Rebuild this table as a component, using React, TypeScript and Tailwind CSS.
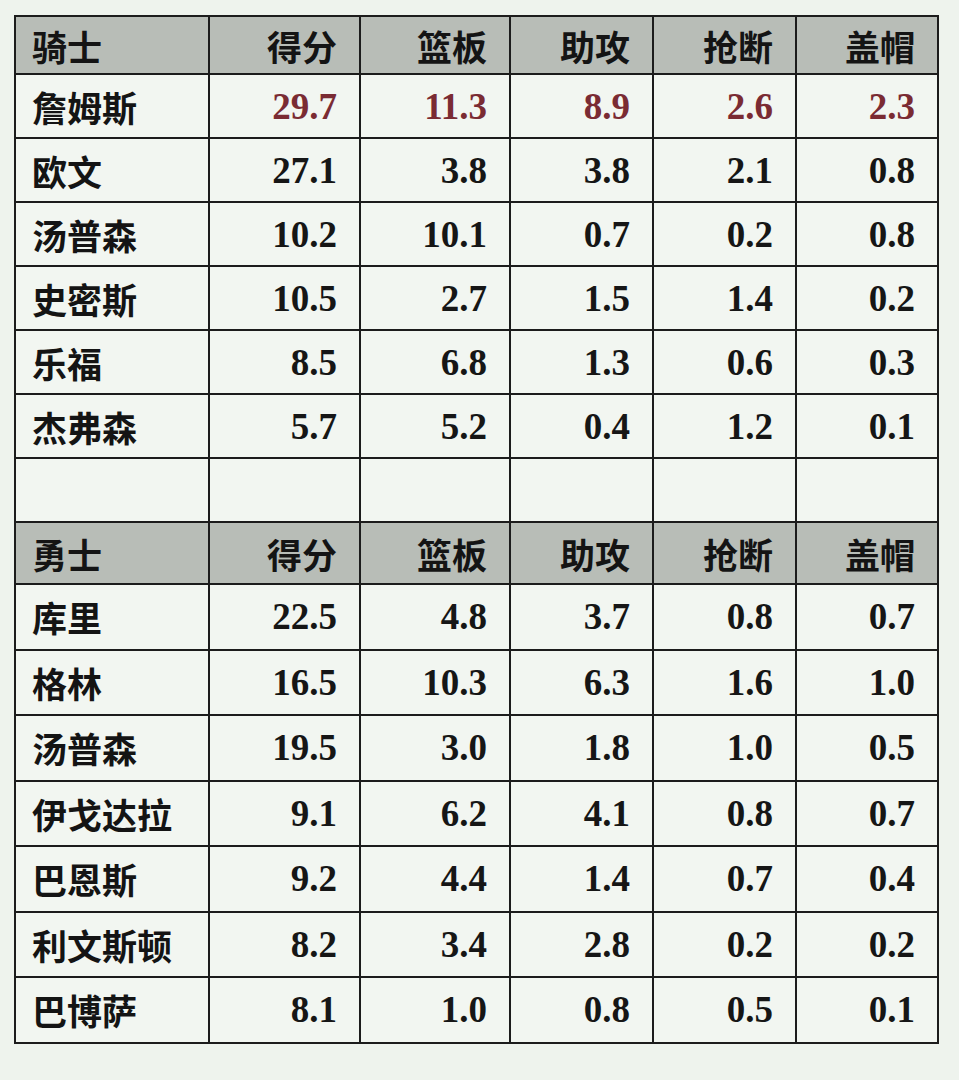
import React from "react";

type Row = { name: string; stats: string[]; hot?: boolean };

const heads = ["得分", "篮板", "助攻", "抢断", "盖帽"];

const cavs: Row[] = [
  { name: "詹姆斯", stats: ["29.7", "11.3", "8.9", "2.6", "2.3"], hot: true },
  { name: "欧文", stats: ["27.1", "3.8", "3.8", "2.1", "0.8"] },
  { name: "汤普森", stats: ["10.2", "10.1", "0.7", "0.2", "0.8"] },
  { name: "史密斯", stats: ["10.5", "2.7", "1.5", "1.4", "0.2"] },
  { name: "乐福", stats: ["8.5", "6.8", "1.3", "0.6", "0.3"] },
  { name: "杰弗森", stats: ["5.7", "5.2", "0.4", "1.2", "0.1"] },
];

const warriors: Row[] = [
  { name: "库里", stats: ["22.5", "4.8", "3.7", "0.8", "0.7"] },
  { name: "格林", stats: ["16.5", "10.3", "6.3", "1.6", "1.0"] },
  { name: "汤普森", stats: ["19.5", "3.0", "1.8", "1.0", "0.5"] },
  { name: "伊戈达拉", stats: ["9.1", "6.2", "4.1", "0.8", "0.7"] },
  { name: "巴恩斯", stats: ["9.2", "4.4", "1.4", "0.7", "0.4"] },
  { name: "利文斯顿", stats: ["8.2", "3.4", "2.8", "0.2", "0.2"] },
  { name: "巴博萨", stats: ["8.1", "1.0", "0.8", "0.5", "0.1"] },
];

const cjk = "font-['Noto_Sans_CJK_SC',sans-serif] font-bold text-[35px] text-[#141414]";
const num = "font-['Liberation_Serif',serif] font-bold text-[37px]";
const cell = "border-2 border-[#1c1c1c] align-middle";

function Header({ team, h }: { team: string; h: string }) {
  return (
    <tr className={`${h} bg-[#b8bdb7]`}>
      <td className={`${cell} pl-[16px] text-left ${cjk}`}>{team}</td>
      {heads.map((t) => (
        <td key={t} className={`${cell} pr-[22px] text-right ${cjk}`}>
          {t}
        </td>
      ))}
    </tr>
  );
}

function StatRow({ row, h }: { row: Row; h: string }) {
  return (
    <tr className={`${h} bg-[#f2f6f1]`}>
      <td className={`${cell} pl-[16px] text-left ${cjk}`}>{row.name}</td>
      {row.stats.map((s, i) => (
        <td
          key={i}
          className={`${cell} pr-[22px] text-right ${num} ${row.hot ? "text-[#7a2b33]" : "text-[#161616]"}`}
        >
          {s}
        </td>
      ))}
    </tr>
  );
}

export default function App() {
  return (
    <div className="w-[959px] h-[1080px] bg-[#eef3ed] pt-[15px] pl-[14px]">
      <table className="border-collapse table-fixed w-[923px]">
        <colgroup>
          <col className="w-[194px]" />
          <col className="w-[151px]" />
          <col className="w-[150px]" />
          <col className="w-[143px]" />
          <col className="w-[143px]" />
          <col className="w-[142px]" />
        </colgroup>
        <tbody className="leading-none">
          <Header team="骑士" h="h-[58px]" />
          {cavs.map((r) => (
            <StatRow key={r.name} row={r} h="h-[64px]" />
          ))}
          <tr className="h-[64px] bg-[#f2f6f1]">
            {[0, 1, 2, 3, 4, 5].map((i) => (
              <td key={i} className={cell}></td>
            ))}
          </tr>
          <Header team="勇士" h="h-[62px]" />
          {warriors.map((r) => (
            <StatRow key={r.name} row={r} h="h-[65.5px]" />
          ))}
        </tbody>
      </table>
    </div>
  );
}
